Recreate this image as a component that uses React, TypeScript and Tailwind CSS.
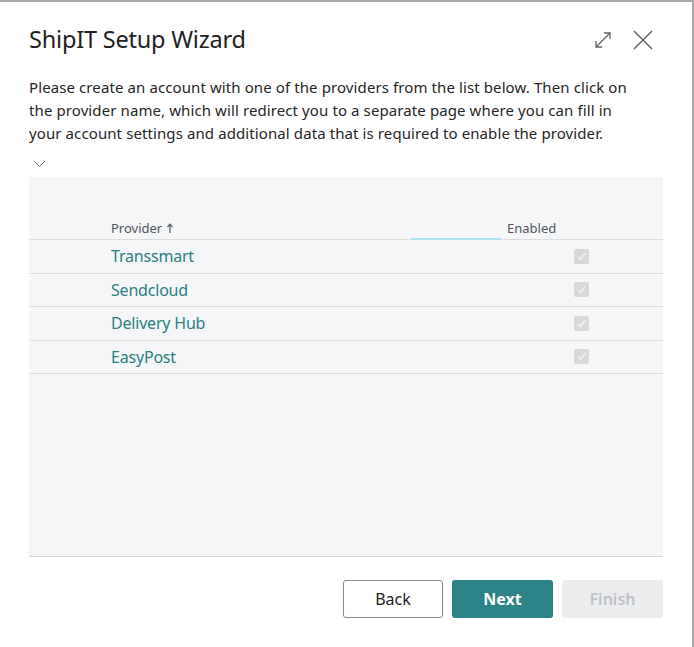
import React from 'react'

const providers = ['Transsmart', 'Sendcloud', 'Delivery Hub', 'EasyPost']

function ExpandIcon() {
  return (
    <svg width="20" height="20" viewBox="0 0 20 20" fill="none" stroke="#616161" strokeWidth="1.3">
      <path d="M3 17 L17 3" />
      <path d="M11 3 H17 V9" />
      <path d="M3 11 V17 H9" />
    </svg>
  )
}

function CloseIcon() {
  return (
    <svg width="22" height="22" viewBox="0 0 22 22" fill="none" stroke="#616161" strokeWidth="1.5">
      <path d="M2 2 L20 20" />
      <path d="M20 2 L2 20" />
    </svg>
  )
}

function CheckBox() {
  return (
    <span className="flex h-[15px] w-[15px] items-center justify-center rounded-[2px] bg-[#d8d8d8]">
      <svg width="11" height="11" viewBox="0 0 11 11" fill="none" stroke="#f3f3f3" strokeWidth="1.4">
        <path d="M2 6 L4.5 8.5 L9 2.5" />
      </svg>
    </span>
  )
}

export default function App() {
  return (
    <div
      className="h-[647px] w-[694px] overflow-hidden bg-white border-t-2 border-r-2 border-[#a8a8a8] text-[#212121]"
      style={{ fontFamily: '"Noto Sans", "Open Sans", sans-serif' }}
    >
      <div className="flex h-[74px] items-center justify-between pl-[29px] pr-[38px]">
        <h1 className="pt-[1px] text-[23.5px] font-normal tracking-[-0.2px]">ShipIT Setup Wizard</h1>
        <div className="flex items-center gap-[19px] pt-[1px]">
          <ExpandIcon />
          <CloseIcon />
        </div>
      </div>

      <p className="pl-[29px] pr-[47px] text-[15px] leading-[23px] tracking-[0.1px] text-[#262626]">
        Please create an account with one of the providers from the list below. Then click on the provider name, which
        will redirect you to a separate page where you can fill in your account settings and additional data that is
        required to enable the provider.
      </p>

      <div className="pl-[33px] pt-[15px] h-[32px]">
        <svg width="13" height="8" viewBox="0 0 13 8" fill="none" stroke="#6b6b6b" strokeWidth="1">
          <path d="M1 1 L6.5 6.5 L12 1" />
        </svg>
      </div>

      <div className="ml-[29px] mr-[29px] h-[380px] bg-[#f5f6f8] border-b border-[#d4d4d4] pt-[41px]">
        <div className="flex h-[22px] items-center border-b border-[#dcdcdc] text-[13px] text-[#505560]">
          <span className="ml-[82px] w-[300px] flex items-center gap-1">
            Provider
            <svg width="8" height="11" viewBox="0 0 8 11" fill="none" stroke="#505560" strokeWidth="1.2">
              <path d="M4 10 V1.5" />
              <path d="M1.5 4 L4 1.2 L6.5 4" />
            </svg>
          </span>
          <span className="relative h-full w-[90px] mr-[6px]">
            <span className="absolute bottom-[-1px] left-0 right-0 h-[2px] bg-[#a9e2ea]" />
          </span>
          <span>Enabled</span>
        </div>
        {providers.map((p) => (
          <div key={p} className="flex h-[33.5px] items-center border-b border-[#dcdcdc]">
            <span className="ml-[82px] w-[463px] text-[16px] tracking-[-0.2px] text-[#2a7f82]">{p}</span>
            <CheckBox />
          </div>
        ))}
      </div>

      <div className="flex justify-end gap-[9px] pr-[29px] pt-[23px]">
        <button className="h-[38px] w-[100px] rounded-[3px] border border-[#8a8a8a] bg-white text-[16px] text-[#212121]">
          Back
        </button>
        <button className="h-[38px] w-[101px] rounded-[3px] bg-[#2b8387] text-[16px] font-bold text-white">
          Next
        </button>
        <button className="h-[38px] w-[101px] rounded-[3px] bg-[#ebecee] text-[16px] font-semibold text-[#bfc2c7]">
          Finish
        </button>
      </div>
    </div>
  )
}
